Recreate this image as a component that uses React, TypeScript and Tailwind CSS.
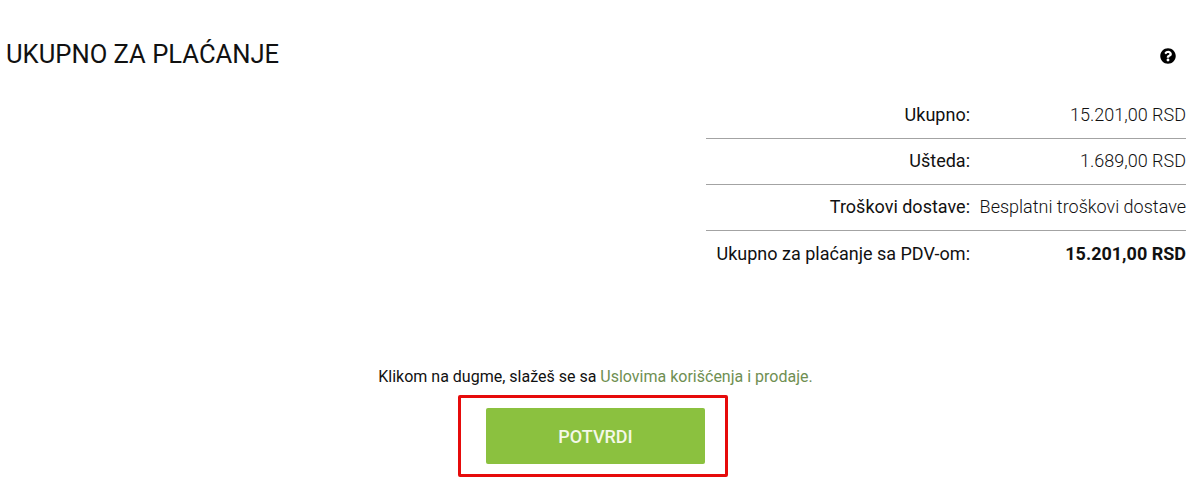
import React from "react";
import { FaQuestionCircle } from "react-icons/fa";

const rows = [
  { label: "Ukupno:", value: "15.201,00 RSD" },
  { label: "Ušteda:", value: "1.689,00 RSD" },
  { label: "Troškovi dostave:", value: "Besplatni troškovi dostave" },
];

export default function App() {
  return (
    <div className="w-[1200px] h-[480px] overflow-hidden bg-white text-[#111] font-['Roboto',sans-serif]">
      <div className="flex items-start justify-between pt-[39px] pl-[6px] pr-[24px] h-[93px]">
        <h1 className="text-[25.6px] leading-[30px] font-normal text-[#111]">UKUPNO ZA PLAĆANJE</h1>
        <FaQuestionCircle className="mt-[9px] text-black" size={16} />
      </div>
      <div className="ml-[706px] w-[480px] text-[18px]">
        {rows.map((r) => (
          <div key={r.label} className="flex h-[46px] items-center border-b border-[#a3a3a3] pb-[2px]">
            <span className="w-[264px] text-right whitespace-nowrap">{r.label}</span>
            <span className="flex-1 text-right font-light whitespace-nowrap">{r.value}</span>
          </div>
        ))}
        <div className="flex h-[46px] items-center pb-[2px]">
          <span className="w-[264px] text-right whitespace-nowrap">Ukupno za plaćanje sa PDV-om:</span>
          <span className="flex-1 text-right font-bold">15.201,00 RSD</span>
        </div>
      </div>
      <div className="mt-[89px] flex flex-col items-center w-[1191px]">
        <p className="text-base leading-[22px] text-[#111]">
          Klikom na dugme, slažeš se sa <a className="text-[#6f8f52]">Uslovima korišćenja i prodaje.</a>
        </p>
        <div className="mt-[7px] mr-[5px] flex h-[82px] w-[270px] items-center pl-[25px] rounded-[2px] border-[3px] border-[#e60b0b]">
          <button className="h-[56px] w-[219px] rounded-[2px] bg-[#8bc13f] text-[18px] font-medium text-[#f4f8e8]">POTVRDI</button>
        </div>
      </div>
    </div>
  );
}
